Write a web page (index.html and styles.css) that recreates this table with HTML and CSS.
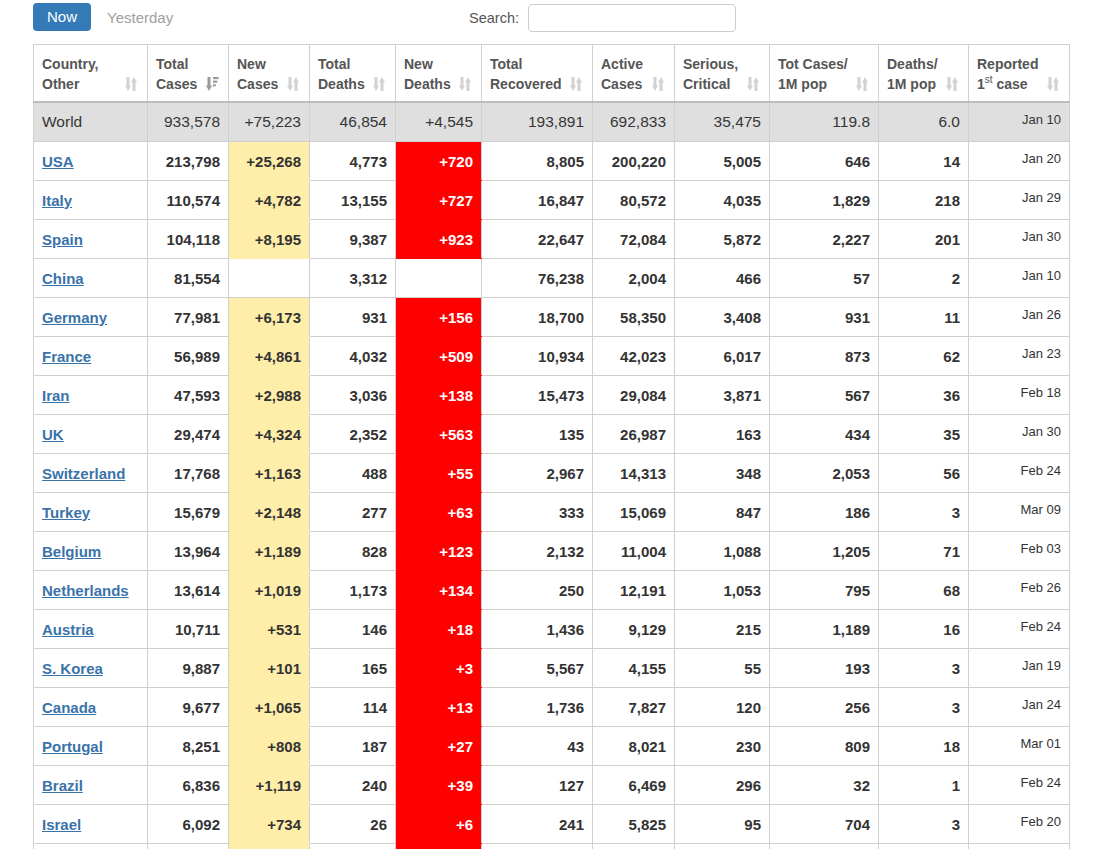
FILE: index.html
```html
<!DOCTYPE html>
<html>
<head>
<meta charset="utf-8">
<link rel="stylesheet" href="styles.css">
</head>
<body>
<svg width="0" height="0" class="defs">
  <defs>
    <g id="ic-sort">
      <rect x="1.5" y="0" width="3" height="9"/>
      <polygon points="0,8.5 6,8.5 3,14"/>
      <polygon points="6,5.5 12,5.5 9,0"/>
      <rect x="7.5" y="5" width="3" height="9"/>
    </g>
    <g id="ic-sorted">
      <rect x="1.5" y="0" width="3" height="9"/>
      <polygon points="0,8.5 6,8.5 3,14"/>
      <rect x="7" y="0" width="5.5" height="2.2"/>
      <rect x="7" y="3.6" width="4.2" height="2.2"/>
      <rect x="7" y="7.2" width="2.8" height="2.2"/>
    </g>
  </defs>
</svg>
<div class="page">
  <div class="topbar">
    <div class="tabs">
      <span class="btn-now">Now</span>
      <span class="tab-yest">Yesterday</span>
    </div>
    <label class="search">Search: <span class="search-input"></span></label>
  </div>
  <table class="covid">
    <colgroup>
      <col class="c1"><col class="c2"><col class="c3"><col class="c4"><col class="c5"><col class="c6"><col class="c7"><col class="c8"><col class="c9"><col class="c10"><col class="c11">
    </colgroup>
    <thead>
      <tr>
        <th>Country,<br>Other<svg class="sort" viewBox="0 0 13 14"><use href="#ic-sort"/></svg></th>
        <th>Total<br>Cases<svg class="sort on" viewBox="0 0 13 14"><use href="#ic-sorted"/></svg></th>
        <th>New<br>Cases<svg class="sort" viewBox="0 0 13 14"><use href="#ic-sort"/></svg></th>
        <th>Total<br>Deaths<svg class="sort" viewBox="0 0 13 14"><use href="#ic-sort"/></svg></th>
        <th>New<br>Deaths<svg class="sort" viewBox="0 0 13 14"><use href="#ic-sort"/></svg></th>
        <th>Total<br>Recovered<svg class="sort" viewBox="0 0 13 14"><use href="#ic-sort"/></svg></th>
        <th>Active<br>Cases<svg class="sort" viewBox="0 0 13 14"><use href="#ic-sort"/></svg></th>
        <th>Serious,<br>Critical<svg class="sort" viewBox="0 0 13 14"><use href="#ic-sort"/></svg></th>
        <th>Tot&nbsp;Cases/<br>1M pop<svg class="sort" viewBox="0 0 13 14"><use href="#ic-sort"/></svg></th>
        <th>Deaths/<br>1M pop<svg class="sort" viewBox="0 0 13 14"><use href="#ic-sort"/></svg></th>
        <th>Reported<br>1<sup>st</sup> case<svg class="sort" viewBox="0 0 13 14"><use href="#ic-sort"/></svg></th>
      </tr>
    </thead>
    <tbody>
      <tr class="world">
        <td class="name">World</td><td>933,578</td><td>+75,223</td><td>46,854</td><td>+4,545</td><td>193,891</td><td>692,833</td><td>35,475</td><td>119.8</td><td>6.0</td><td class="date">Jan 10</td>
      </tr>
      <tr><td class="name"><a>USA</a></td><td>213,798</td><td class="nc">+25,268</td><td>4,773</td><td class="nd">+720</td><td>8,805</td><td>200,220</td><td>5,005</td><td>646</td><td>14</td><td class="date">Jan 20</td></tr>
      <tr><td class="name"><a>Italy</a></td><td>110,574</td><td class="nc">+4,782</td><td>13,155</td><td class="nd">+727</td><td>16,847</td><td>80,572</td><td>4,035</td><td>1,829</td><td>218</td><td class="date">Jan 29</td></tr>
      <tr><td class="name"><a>Spain</a></td><td>104,118</td><td class="nc">+8,195</td><td>9,387</td><td class="nd">+923</td><td>22,647</td><td>72,084</td><td>5,872</td><td>2,227</td><td>201</td><td class="date">Jan 30</td></tr>
      <tr><td class="name"><a>China</a></td><td>81,554</td><td></td><td>3,312</td><td></td><td>76,238</td><td>2,004</td><td>466</td><td>57</td><td>2</td><td class="date">Jan 10</td></tr>
      <tr><td class="name"><a>Germany</a></td><td>77,981</td><td class="nc">+6,173</td><td>931</td><td class="nd">+156</td><td>18,700</td><td>58,350</td><td>3,408</td><td>931</td><td>11</td><td class="date">Jan 26</td></tr>
      <tr><td class="name"><a>France</a></td><td>56,989</td><td class="nc">+4,861</td><td>4,032</td><td class="nd">+509</td><td>10,934</td><td>42,023</td><td>6,017</td><td>873</td><td>62</td><td class="date">Jan 23</td></tr>
      <tr><td class="name"><a>Iran</a></td><td>47,593</td><td class="nc">+2,988</td><td>3,036</td><td class="nd">+138</td><td>15,473</td><td>29,084</td><td>3,871</td><td>567</td><td>36</td><td class="date">Feb 18</td></tr>
      <tr><td class="name"><a>UK</a></td><td>29,474</td><td class="nc">+4,324</td><td>2,352</td><td class="nd">+563</td><td>135</td><td>26,987</td><td>163</td><td>434</td><td>35</td><td class="date">Jan 30</td></tr>
      <tr><td class="name"><a>Switzerland</a></td><td>17,768</td><td class="nc">+1,163</td><td>488</td><td class="nd">+55</td><td>2,967</td><td>14,313</td><td>348</td><td>2,053</td><td>56</td><td class="date">Feb 24</td></tr>
      <tr><td class="name"><a>Turkey</a></td><td>15,679</td><td class="nc">+2,148</td><td>277</td><td class="nd">+63</td><td>333</td><td>15,069</td><td>847</td><td>186</td><td>3</td><td class="date">Mar 09</td></tr>
      <tr><td class="name"><a>Belgium</a></td><td>13,964</td><td class="nc">+1,189</td><td>828</td><td class="nd">+123</td><td>2,132</td><td>11,004</td><td>1,088</td><td>1,205</td><td>71</td><td class="date">Feb 03</td></tr>
      <tr><td class="name"><a>Netherlands</a></td><td>13,614</td><td class="nc">+1,019</td><td>1,173</td><td class="nd">+134</td><td>250</td><td>12,191</td><td>1,053</td><td>795</td><td>68</td><td class="date">Feb 26</td></tr>
      <tr><td class="name"><a>Austria</a></td><td>10,711</td><td class="nc">+531</td><td>146</td><td class="nd">+18</td><td>1,436</td><td>9,129</td><td>215</td><td>1,189</td><td>16</td><td class="date">Feb 24</td></tr>
      <tr><td class="name"><a>S. Korea</a></td><td>9,887</td><td class="nc">+101</td><td>165</td><td class="nd">+3</td><td>5,567</td><td>4,155</td><td>55</td><td>193</td><td>3</td><td class="date">Jan 19</td></tr>
      <tr><td class="name"><a>Canada</a></td><td>9,677</td><td class="nc">+1,065</td><td>114</td><td class="nd">+13</td><td>1,736</td><td>7,827</td><td>120</td><td>256</td><td>3</td><td class="date">Jan 24</td></tr>
      <tr><td class="name"><a>Portugal</a></td><td>8,251</td><td class="nc">+808</td><td>187</td><td class="nd">+27</td><td>43</td><td>8,021</td><td>230</td><td>809</td><td>18</td><td class="date">Mar 01</td></tr>
      <tr><td class="name"><a>Brazil</a></td><td>6,836</td><td class="nc">+1,119</td><td>240</td><td class="nd">+39</td><td>127</td><td>6,469</td><td>296</td><td>32</td><td>1</td><td class="date">Feb 24</td></tr>
      <tr><td class="name"><a>Israel</a></td><td>6,092</td><td class="nc">+734</td><td>26</td><td class="nd">+6</td><td>241</td><td>5,825</td><td>95</td><td>704</td><td>3</td><td class="date">Feb 20</td></tr>
      <tr class="tail"><td class="name"></td><td></td><td class="nc"></td><td></td><td class="nd"></td><td></td><td></td><td></td><td></td><td></td><td class="date"></td></tr>
    </tbody>
  </table>
</div>
</body>
</html>
```
FILE: styles.css
```css
html, body {
  margin: 0;
  padding: 0;
  background: #fff;
}
.defs {
  position: absolute;
  width: 0;
  height: 0;
}
.page {
  padding: 0 33px;
  font-family: "Liberation Sans", Arial, sans-serif;
  color: #333;
}
.topbar {
  width: 703px;
  height: 44px;
  display: flex;
  justify-content: space-between;
  align-items: flex-start;
}
.tabs {
  display: flex;
  align-items: center;
  gap: 16px;
  margin-top: 3px;
}
.btn-now {
  display: block;
  height: 28px;
  line-height: 28px;
  padding: 0 14px;
  border-radius: 4px;
  background: #337ab7;
  color: #fff;
  font-size: 15px;
}
.tab-yest {
  color: #a0a0a0;
  font-size: 15px;
}
.search {
  display: flex;
  align-items: center;
  gap: 9px;
  margin-top: 4px;
  font-size: 14.5px;
  color: #555;
}
.search-input {
  display: block;
  width: 206px;
  height: 26px;
  border: 1px solid #ccc;
  border-radius: 4px;
}
.covid {
  width: 1037px;
  table-layout: fixed;
  border-collapse: collapse;
}
.c1 { width: 114px; }
.c2 { width: 81px; }
.c3 { width: 81px; }
.c4 { width: 86px; }
.c5 { width: 86px; }
.c6 { width: 111px; }
.c7 { width: 82px; }
.c8 { width: 95px; }
.c9 { width: 109px; }
.c10 { width: 90px; }
.c11 { width: 101px; }
.covid th {
  position: relative;
  border: 1px solid #d0d0d0;
  border-bottom: 2px solid #bcbcbc;
  padding: 9px 8px 7px 8px;
  height: 40px;
  text-align: left;
  vertical-align: top;
  font-size: 14px;
  line-height: 20px;
  font-weight: bold;
  color: #555;
  white-space: nowrap;
}
.covid th sup {
  font-size: 10px;
  line-height: 0;
  vertical-align: 6px;
  font-weight: normal;
  color: #555;
}
.sort {
  position: absolute;
  right: 9px;
  bottom: 10px;
  width: 13px;
  height: 14px;
  fill: #d2d2d2;
}
.sort.on {
  fill: #9a9a9a;
}
.covid td {
  border: 1px solid #d0d0d0;
  height: 38px;
  padding: 0 8px;
  text-align: right;
  vertical-align: middle;
  font-size: 15px;
  font-weight: bold;
  color: #333;
  white-space: nowrap;
}
.covid td.name {
  text-align: left;
}
.covid td a {
  color: #3a73aa;
  text-decoration: underline;
}
.covid td.date {
  height: 33px;
  font-size: 13px;
  font-weight: normal;
  padding-bottom: 5px;
  color: #333;
}
.covid td.nc {
  background: #ffeeaa;
  border-top-color: #ffeeaa;
  border-bottom-color: #ffeeaa;
}
.covid td.nd {
  background: #ff0000;
  color: #fff;
  border-top-color: #ff0000;
  border-bottom-color: #ff0000;
}
.covid tr.world td {
  background: #dfdfdf;
  font-weight: normal;
  font-size: 15.5px;
  color: #363636;
}
.covid tr.world td.date {
  font-size: 13px;
}
```
